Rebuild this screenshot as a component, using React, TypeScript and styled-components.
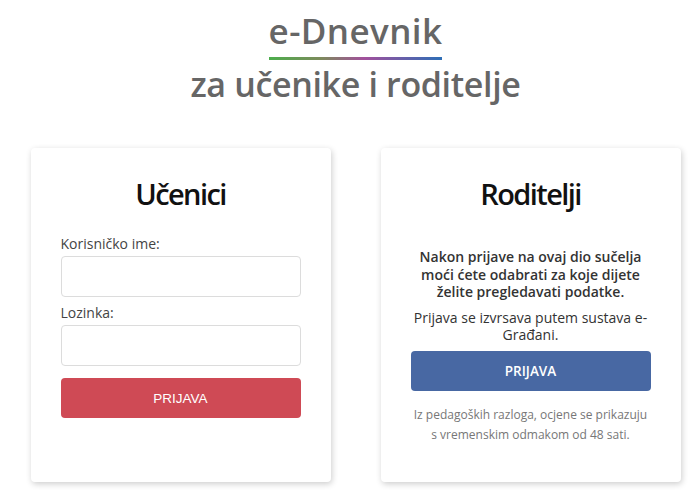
import React from "react";
import styled, { createGlobalStyle } from "styled-components";

const GlobalStyle = createGlobalStyle`
  html, body {
    margin: 0;
    padding: 0;
    background: #ffffff;
  }
  body {
    font-family: "Open Sans", "Noto Sans", sans-serif;
    color: #333;
  }
  * {
    box-sizing: border-box;
  }
`;

const Page = styled.div`
  display: flex;
  flex-direction: column;
  align-items: center;
  min-height: 100vh;
  padding: 11px 0 13px 18px;
`;

const Header = styled.header`
  display: flex;
  flex-direction: column;
  align-items: center;
  color: #666;
`;

const Logo = styled.div`
  display: inline-block;
  font-size: 35px;
  line-height: 40px;
  letter-spacing: 0.4px;
  font-weight: 600;
  &::after {
    content: "";
    display: block;
    height: 3px;
    margin: 6px 0 0;
    background: linear-gradient(90deg, #4cae4c 0%, #7d8a5c 30%, #a2509c 55%, #2d6eb6 100%);
  }
`;

const Subtitle = styled.div`
  margin-top: 3px;
  font-size: 34px;
  line-height: 42px;
  letter-spacing: -0.35px;
  font-weight: 600;
`;

const Cards = styled.main`
  display: flex;
  gap: 50px;
  margin-top: 43px;
`;

const Card = styled.section`
  width: 300px;
  height: 334px;
  padding: 28px 30px 30px;
  background: #fff;
  border-radius: 4px;
  box-shadow: 1px 2px 6px rgba(0, 0, 0, 0.2);
  display: flex;
  flex-direction: column;
  align-items: stretch;
  & > * {
    flex-shrink: 0;
  }
`;

const CardTitle = styled.h2`
  margin: 0 0 22px;
  text-align: center;
  font-size: 29px;
  line-height: 36px;
  font-weight: 600;
  letter-spacing: -1.6px;
  color: #111;
`;

const Label = styled.label`
  display: block;
  font-size: 14px;
  line-height: 20px;
  color: #444;
  margin-bottom: 2px;
`;

const Input = styled.input`
  display: block;
  width: 100%;
  height: 41px;
  margin-bottom: 6px;
  border: 1px solid #dcdcdc;
  border-radius: 4px;
  background: #fff;
`;

const Button = styled.button<{ $tone: "red" | "blue" }>`
  display: block;
  width: 100%;
  height: 40px;
  border: none;
  border-radius: 4px;
  color: #fff;
  font-size: 13.5px;
  cursor: pointer;
  background: ${(p) => (p.$tone === "red" ? "#cf4a55" : "#4868a3")};
  font-family: ${(p) =>
    p.$tone === "red" ? '"Liberation Sans", Arial, sans-serif' : '"Open Sans", sans-serif'};
  font-weight: ${(p) => (p.$tone === "red" ? 400 : 600)};
`;

const LoginButton = styled(Button)`
  margin-top: 6px;
`;

const Lead = styled.p`
  margin: 14px 0 8px;
  text-align: center;
  font-size: 14px;
  line-height: 17.5px;
  font-weight: 600;
  color: #333;
`;

const Info = styled.p`
  margin: 0 0 8px;
  text-align: center;
  font-size: 14px;
  line-height: 17px;
  color: #333;
`;

const Note = styled.p`
  margin: 14px 0 0;
  text-align: center;
  font-size: 12px;
  line-height: 20px;
  color: #777;
`;

export default function App() {
  return (
    <>
      <GlobalStyle />
      <Page>
        <Header>
          <Logo>e-Dnevnik</Logo>
          <Subtitle>za učenike i roditelje</Subtitle>
        </Header>
        <Cards>
          <Card>
            <CardTitle>Učenici</CardTitle>
            <Label>Korisničko ime:</Label>
            <Input type="text" />
            <Label>Lozinka:</Label>
            <Input type="password" />
            <LoginButton $tone="red">PRIJAVA</LoginButton>
          </Card>
          <Card>
            <CardTitle>Roditelji</CardTitle>
            <Lead>
              Nakon prijave na ovaj dio sučelja moći ćete odabrati za koje dijete želite
              pregledavati podatke.
            </Lead>
            <Info>Prijava se izvrsava putem sustava e-Građani.</Info>
            <Button $tone="blue">PRIJAVA</Button>
            <Note>
              Iz pedagoških razloga, ocjene se prikazuju s vremenskim odmakom od 48 sati.
            </Note>
          </Card>
        </Cards>
      </Page>
    </>
  );
}
